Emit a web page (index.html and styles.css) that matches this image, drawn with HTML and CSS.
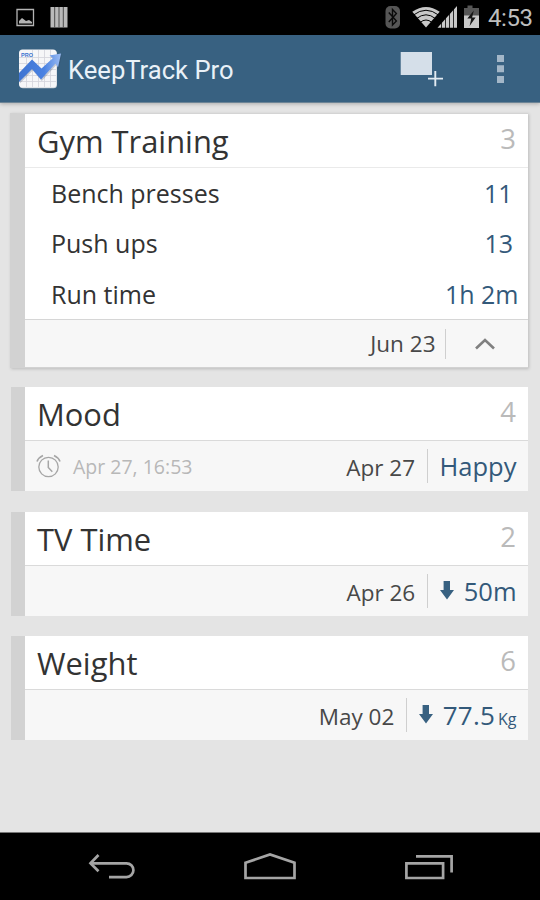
FILE: index.html
```html
<!DOCTYPE html>
<html lang="en">
<head>
<meta charset="utf-8">
<title>KeepTrack Pro</title>
<link rel="stylesheet" href="styles.css">
</head>
<body>
<div class="status">
  <svg class="status-left" width="60" height="35" viewBox="0 0 60 35">
    <path d="M1 9.5H17.5V25.500H1z" fill="none" stroke="#b4b4b4" stroke-width="1.3"/>
    <path d="M3 23.500V21l3-3 2 1.500 2 1.500 3-1 3 2v1.500z" fill="#b4b4b4"/>
    <path d="M34.500 7h17v20.500h-17z" fill="#bababa"/>
    <path d="M38.700 7v20.500M43 7v20.500M47.300 7v20.500" stroke="#4a4a4a" stroke-width="1"/>
  </svg>
  <svg class="status-right" width="96" height="35" viewBox="0 0 96 35">
    <rect x="0.500" y="6" width="14.500" height="22.500" rx="5" fill="#565656"/>
    <path d="M3.800 12.500l7.600 8.500-3.900 4V9.500l3.900 4-7.600 8.500" fill="none" stroke="#0a0a0a" stroke-width="1.400"/>
    <path d="M41 27.500L27.300 11.800Q41 2 54.700 11.800z" fill="#c8c8c8"/>
    <path d="M28.500 15Q41 5.500 53.500 15M31.500 18.600Q41 11 50.500 18.600M35 22.500Q41 17.500 47 22.500" fill="none" stroke="#000" stroke-width="1"/>
    <path d="M52.500 27.800L72 6V27.800z" fill="#c8c8c8"/>
    <path d="M56.500 17v11M60.500 13v15M64.500 10v18M68.500 7v21" stroke="#000" stroke-width=".8"/>
    <path d="M79 8h3.500V5.500h5V8H94v8H79z" fill="#565656"/>
    <path d="M79 15.500H94V28H79z" fill="#c8c8c8"/>
    <path d="M88.800 10.500l-6.500 8h4l-1.700 7.500 6-8.500h-3.500z" fill="#151515"/>
  </svg>
  <span class="clock">4:53</span>
</div>
<header class="bar">
  <svg class="logo" width="44" height="42" viewBox="0 0 44 42">
    <defs><linearGradient id="g" x1="0" y1="0" x2="1" y2="0"><stop offset="0" stop-color="#3f74d2"/><stop offset=".6" stop-color="#4a82e2"/><stop offset="1" stop-color="#9cbcf3"/></linearGradient></defs>
    <rect x="1.500" y="1.300" width="37.500" height="38" rx="3.500" fill="#c9ced4"/>
    <rect x="1" y="0.500" width="37.500" height="38" rx="3.500" fill="#f6f6f8"/>
    <path d="M8.500 8v30M14.500 1v37M20.500 1v37M26.500 1v37M32.500 1v37M1 8.500h37M1 14.500h37M1 20.500h37M1 26.500h37M1 32.500h37" stroke="#d3d3da" stroke-width=".8"/>
    <path d="M1 24.500L14 11l9.500 9L35 9.500l-3.500-2.500L43 5l-3 14-2.500-4L23 31 14 20.500 1 33.500z" fill="#31425f" opacity=".25" transform="translate(0.800 1)"/>
    <path d="M1 24L14 10.500l9.500 9L35 9l-3.500-2.500L43 4.500l-3 14-2.500-4L23 30.500 14 20 1 33z" fill="url(#g)"/>
    <text class="pro" x="3" y="7.500">PRO</text>
  </svg>
  <h1>KeepTrack Pro</h1>
  <svg class="add" width="44" height="36" viewBox="0 0 44 36">
    <path d="M0.700 0H32V23H0.700z" fill="#d5dfe9"/>
    <path d="M35.300 18.500v16M28 26.800h15" stroke="#386181" stroke-width="4"/>
    <path d="M35.300 19v15.300M28 26.600h15" stroke="#e3ebf2" stroke-width="1.900"/>
  </svg>
  <svg class="more" width="8" height="28" viewBox="0 0 8 28"><path d="M0 0h7v7H0zM0 10.300h7v7H0zM0 21h7v7H0z" fill="#a4b7c8"/></svg>
</header>
<main>
  <section class="card open">
    <div class="title"><h2>Gym Training</h2><span class="count">3</span></div>
    <ul class="rows">
      <li><span>Bench presses</span><b class="v1">11</b></li>
      <li><span>Push ups</span><b class="v2">13</b></li>
      <li><span>Run time</span><b>1h 2m</b></li>
    </ul>
    <div class="foot"><span class="date">Jun 23</span><i class="sep"></i>
      <svg class="chev" width="20" height="12" viewBox="0 0 20 12"><path d="M1 10.500L10 2l9 8.500" fill="none" stroke="#808080" stroke-width="2.600"/></svg>
    </div>
  </section>
  <section class="card">
    <div class="title"><h2>Mood</h2><span class="count">4</span></div>
    <div class="foot">
      <svg class="alarm" width="26" height="24" viewBox="0 0 26 24" fill="none" stroke="#a6a6a6"><circle cx="12.500" cy="13" r="9.700" stroke-width="1.300"/><path d="M12.300 6.500V13.500l4 4.300" stroke-width="1.500"/><path d="M1 7.500Q2.500 3.500 7 1.500M24 7.500Q22.500 3.500 18 1.500" stroke-width="1.700"/></svg>
      <span class="remind">Apr 27, 16:53</span>
      <span class="date">Apr 27</span><i class="sep"></i><b class="val">Happy</b>
    </div>
  </section>
  <section class="card">
    <div class="title"><h2>TV Time</h2><span class="count">2</span></div>
    <div class="foot"><span class="date">Apr 26</span><i class="sep"></i>
      <svg class="down" width="14" height="19" viewBox="0 0 14 19"><path d="M3.600 0h6.400v9H14L7 18.500 0 9h3.600z" fill="#386181"/></svg>
      <b class="val">50m</b></div>
  </section>
  <section class="card">
    <div class="title"><h2>Weight</h2><span class="count">6</span></div>
    <div class="foot"><span class="date">May 02</span><i class="sep"></i>
      <svg class="down" width="14" height="19" viewBox="0 0 14 19"><path d="M3.600 0h6.400v9H14L7 18.500 0 9h3.600z" fill="#386181"/></svg>
      <b class="val wide">77.5<small>Kg</small></b></div>
  </section>
</main>
<nav>
  <svg width="48" height="28" viewBox="0 0 48 28" fill="none" stroke="#a5a5a5" stroke-width="2.700"><path d="M2.500 11.300H38.500a6.900 6.900 0 0 1 0 13.800H21"/><path d="M10.500 3L2.500 11.300l8 8"/></svg>
  <svg width="52" height="28" viewBox="0 0 52 28" fill="none" stroke="#a5a5a5" stroke-width="2.700"><path d="M1.500 10.800L26 2.500l24.500 8.300V26H1.500z"/></svg>
  <svg width="48" height="28" viewBox="0 0 48 28" fill="none" stroke="#a5a5a5" stroke-width="2.700"><path d="M1.400 11.400H38.100V26H1.400zM11 4.300H46.600V20.500"/></svg>
</nav>
</body>
</html>
```

FILE: styles.css
```css
* { box-sizing: border-box; }
body {
  margin: 0;
  width: 540px;
  height: 900px;
  overflow: hidden;
  display: flex;
  flex-direction: column;
  background: #e4e4e4;
  font-family: "Open Sans", sans-serif;
  color: #333;
}
h1, h2, ul { margin: 0; padding: 0; font-weight: 400; }
svg { display: block; flex: none; }
b { font-weight: 400; }

.status {
  height: 35px;
  flex: none;
  display: flex;
  background: #000;
  padding-left: 16px;
}
.status-right { margin-left: 309px; }
.clock {
  margin-left: 7px;
  font: 24px/36px Roboto, sans-serif;
  color: #bebebe;
  letter-spacing: -0.400px;
}

.bar {
  height: 68px;
  flex: none;
  display: flex;
  align-items: center;
  padding-left: 18px;
  background: #386181;
  border-bottom: 1px solid #6c8496;
  box-shadow: 0 1px 4px rgba(0, 0, 0, .25);
}
.logo { margin-top: 3px; }
.pro { font: bold 5.500px "Liberation Sans", sans-serif; fill: #3c72d0; }
.bar h1 {
  width: 180px;
  margin: 2px 0 0 6px;
  font: 400 25.600px/36px Roboto, sans-serif;
  color: #e9f1f8;
  white-space: nowrap;
}
.add { margin: 3px 0 0 152px; }
.more { margin-left: 53px; }

main {
  flex: 1;
  padding: 10px 12.500px 0 11px;
}
.card {
  height: 104px;
  margin-bottom: 20.500px;
  border-left: 14px solid #d2d2d2;
  background: #fff;
  display: flex;
  flex-direction: column;
}
.card.open {
  height: 255px;
  margin: 0 0 19.300px -1px;
  border-left-width: 15px;
  border-top: 1px solid #d4d4d4;
  border-bottom: 1px solid #d2d2d2;
  box-shadow: 1px 1px 3px rgba(0, 0, 0, .18);
}
.title {
  height: 54px;
  flex: none;
  display: flex;
  justify-content: space-between;
  padding: 1px 11.500px 0 12px;
  border-bottom: 1px solid #dadada;
  line-height: 53px;
  white-space: nowrap;
}
.open .title { height: 53.500px; border-bottom-color: #eaeaea; }
.title h2 { font-size: 30.900px; }
.count { font-size: 27.500px; line-height: 48px; color: #bababa; }

.rows { list-style: none; }
.rows li {
  height: 50.500px;
  display: flex;
  justify-content: space-between;
  padding: 0 9px 0 26px;
  font-size: 25px;
  line-height: 50px;
}
.rows b { color: #33597a; }
.v1 { padding-right: 6px; }
.v2 { padding-right: 5.500px; }

.foot {
  flex: 1;
  display: flex;
  align-items: center;
  justify-content: flex-end;
  padding-right: 11px;
  background: #f7f7f7;
  white-space: nowrap;
}
.open .foot { border-top: 1px solid #d6d6d6; }
.date { font-size: 22.500px; line-height: 30px; padding-top: 4px; color: #484848; }
.open .date { padding-top: 1px; }
.sep { width: 1px; height: 34px; margin: 0 12px 0 11.500px; background: #cfcfcf; }
.open .sep { height: 30px; margin: 0 29.500px 0 9px; }
.chev { margin-right: 21.500px; }
.val { font-size: 25.500px; line-height: 34px; color: #33597a; }
.wide { font-size: 26px; letter-spacing: .2px; }
.val small { font-size: 16px; line-height: 16px; letter-spacing: 0; margin-left: 3px; }
.down { margin: 0 10px 1px 0; }
.alarm { margin-left: 11px; }
.remind { margin: 0 auto 0 11px; font-size: 19.500px; color: #b8b8b8; }

nav {
  height: 68px;
  flex: none;
  display: flex;
  justify-content: space-between;
  padding: 19px 87px 0 88px;
  background: #000;
  border-top: 1px solid #777;
}
nav svg:nth-child(2) { margin-right: 2px; }
```
